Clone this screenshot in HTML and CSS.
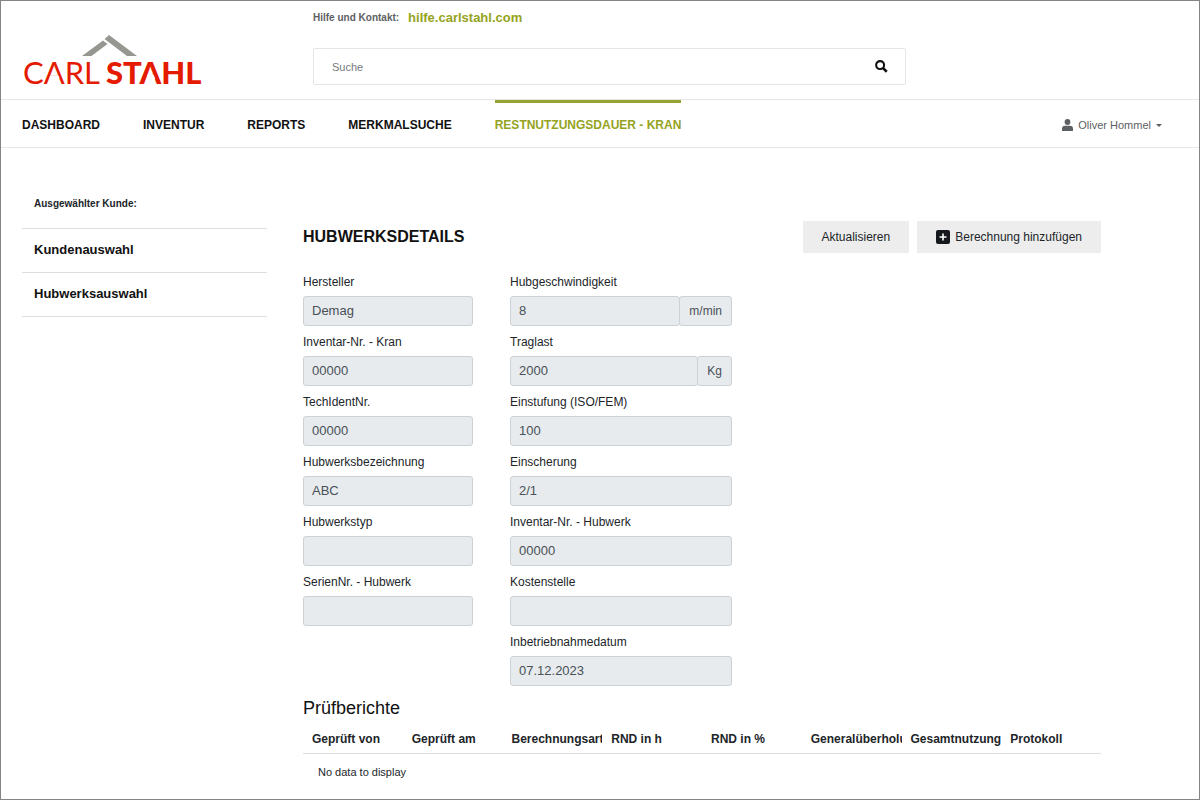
FILE: index.html
```html
<!DOCTYPE html>
<html lang="de">
<head>
<meta charset="utf-8">
<meta name="viewport" content="width=device-width, initial-scale=1">
<title>Restnutzungsdauer - Kran</title>
<link rel="stylesheet" href="styles.css">
</head>
<body>
<header class="header">
  <a class="logo" href="#" aria-label="Carl Stahl">
    <svg width="184" height="51" viewBox="0 0 184 51">
      <path fill="#969790" d="M59 22 80 6.500 84.500 10 68.500 22ZM81.500 5 86 1 114 22H104Z"/>
      <g class="logo-text">
        <text class="logo-light" x="0" y="50">CARL</text>
        <text class="logo-heavy" x="83" y="50">STAHL</text>
      </g>
      <path fill="#fff" d="M27.100 41.400H35.500L36.600 44.200H26ZM124.300 41.100H130.800L132.300 45H122.800Z"/>
    </svg>
  </a>
  <div class="header-main">
    <p class="help">Hilfe und Kontakt: <a class="help-link" href="#">hilfe.carlstahl.com</a></p>
    <form class="search" role="search">
      <input class="search-input" type="search" placeholder="Suche" aria-label="Suche">
      <button class="search-button" type="button" aria-label="Suchen">
        <svg width="13" height="13" viewBox="0 0 14 14" fill="none" stroke="#111" stroke-width="2.200"><circle cx="5.500" cy="5.500" r="4.300"/><path stroke-width="2.800" d="m8.700 8.700 4 4"/></svg>
      </button>
    </form>
  </div>
</header>
<nav class="nav">
  <ul class="nav-list">
    <li><a class="nav-link" href="#">DASHBOARD</a></li>
    <li><a class="nav-link" href="#">INVENTUR</a></li>
    <li><a class="nav-link" href="#">REPORTS</a></li>
    <li><a class="nav-link" href="#">MERKMALSUCHE</a></li>
    <li><a class="nav-link active" href="#" aria-current="page">RESTNUTZUNGSDAUER - KRAN</a></li>
  </ul>
  <button class="user" type="button">
    <svg width="11" height="12" viewBox="0 0 11 12" fill="#5d6063"><circle cx="5.500" cy="3" r="2.900"/><path d="M0 12V9.800Q0 6.800 3 6.800H8Q11 6.800 11 9.800V12Z"/></svg>
    <span>Oliver Hommel</span>
    <svg width="6" height="3" viewBox="0 0 6 3" fill="#5d6063"><path d="M0 0H6L3 3Z"/></svg>
  </button>
</nav>
<div class="page">
  <aside class="sidebar">
    <p class="sidebar-title">Ausgewählter Kunde:</p>
    <a class="sidebar-link" href="#">Kundenauswahl</a>
    <a class="sidebar-link" href="#">Hubwerksauswahl</a>
  </aside>
  <main class="content">
    <div class="content-head">
      <h1 class="title">HUBWERKSDETAILS</h1>
      <div class="actions">
        <button class="button" type="button">Aktualisieren</button>
        <button class="button" type="button">
          <svg width="14" height="14" viewBox="0 0 14 14"><rect width="14" height="14" rx="2" fill="#15191d"/><path d="M7 3.500V10.500M3.500 7H10.500" stroke="#fff" stroke-width="1.600"/></svg>
          <span>Berechnung hinzufügen</span>
        </button>
      </div>
    </div>
    <form class="details">
      <div class="column">
        <div class="field"><label for="hersteller">Hersteller</label><div class="group"><input id="hersteller" value="Demag" readonly></div></div>
        <div class="field"><label for="kran">Inventar-Nr. - Kran</label><div class="group"><input id="kran" value="00000" readonly></div></div>
        <div class="field"><label for="techident">TechIdentNr.</label><div class="group"><input id="techident" value="00000" readonly></div></div>
        <div class="field"><label for="bezeichnung">Hubwerksbezeichnung</label><div class="group"><input id="bezeichnung" value="ABC" readonly></div></div>
        <div class="field"><label for="typ">Hubwerkstyp</label><div class="group"><input id="typ" value="" readonly></div></div>
        <div class="field"><label for="serie">SerienNr. - Hubwerk</label><div class="group"><input id="serie" value="" readonly></div></div>
      </div>
      <div class="column">
        <div class="field"><label for="geschwindigkeit">Hubgeschwindigkeit</label><div class="group"><input id="geschwindigkeit" value="8" readonly><span class="unit">m/min</span></div></div>
        <div class="field"><label for="traglast">Traglast</label><div class="group"><input id="traglast" value="2000" readonly><span class="unit">Kg</span></div></div>
        <div class="field"><label for="einstufung">Einstufung (ISO/FEM)</label><div class="group"><input id="einstufung" value="100" readonly></div></div>
        <div class="field"><label for="einscherung">Einscherung</label><div class="group"><input id="einscherung" value="2/1" readonly></div></div>
        <div class="field"><label for="hubwerk">Inventar-Nr. - Hubwerk</label><div class="group"><input id="hubwerk" value="00000" readonly></div></div>
        <div class="field"><label for="kostenstelle">Kostenstelle</label><div class="group"><input id="kostenstelle" value="" readonly></div></div>
        <div class="field"><label for="datum">Inbetriebnahmedatum</label><div class="group"><input id="datum" value="07.12.2023" readonly></div></div>
      </div>
    </form>
    <h2 class="subtitle">Prüfberichte</h2>
    <table class="reports">
      <thead>
        <tr><th>Geprüft von</th><th>Geprüft am</th><th>Berechnungsart</th><th>RND in h</th><th>RND in %</th><th>Generalüberholung</th><th>Gesamtnutzung</th><th>Protokoll</th></tr>
      </thead>
      <tbody>
        <tr><td colspan="8">No data to display</td></tr>
      </tbody>
    </table>
  </main>
</div>
</body>
</html>
```

FILE: styles.css
```css
* { box-sizing: border-box; }

body {
  margin: 0;
  min-height: 100vh;
  border: 1px solid #858585;
  background: #fff;
  color: #212529;
  font: 12px/18px "Liberation Sans", Arial, sans-serif;
}

a { color: inherit; text-decoration: none; }
button, input { font: inherit; color: inherit; }
svg { display: block; flex: none; }

.header {
  display: grid;
  grid-template-columns: 290px minmax(0, 593px);
  padding: 8px 22px 14px;
}

.logo { align-self: end; }
.logo svg { overflow: visible; }

.logo-text {
  fill: #e41b00;
  font-family: Lato, sans-serif;
  font-size: 31px;
}

.logo-light { font-weight: 400; }
.logo-heavy { font-weight: 900; }

.help {
  display: flex;
  align-items: center;
  gap: 9px;
  margin: 0 0 21px;
  font-size: 10px;
  font-weight: 700;
  color: #5d6063;
}

.help-link { font-size: 13px; color: #95a321; }

.search {
  display: flex;
  height: 37px;
  border: 1px solid #e6e6e6;
  border-radius: 2px;
}

.search-input {
  flex: 1;
  min-width: 0;
  padding: 0 18px;
  border: 0;
  background: none;
  font-size: 11px;
}

.search-input::placeholder { color: #75797d; opacity: 1; }

.search-button {
  display: flex;
  align-items: center;
  padding: 0 17px;
  border: 0;
  background: none;
}

.nav {
  display: flex;
  justify-content: space-between;
  height: 49px;
  padding: 0 37px 0 21px;
  border-top: 1px solid #e6e6e6;
  border-bottom: 1px solid #e6e6e6;
}

.nav-list {
  display: flex;
  gap: 43px;
  margin: 0;
  padding: 0;
  list-style: none;
  font-weight: 700;
  color: #111;
}

.nav-link {
  display: block;
  height: 47px;
  border-top: 3px solid transparent;
  line-height: 45px;
  white-space: nowrap;
}

.nav-link.active { border-color: #95a336; color: #95a321; }

.user {
  display: flex;
  align-items: center;
  gap: 5px;
  padding: 3px 0 0;
  border: 0;
  background: none;
  font-size: 11px;
  color: #5d6063;
}

.page {
  display: grid;
  grid-template-columns: 245px minmax(0, 1fr);
  gap: 36px;
  padding: 47px 98px 0 21px;
}

.sidebar-title {
  margin: 0;
  padding: 0 12px 15px;
  border-bottom: 1px solid #dedede;
  font-size: 10px;
  font-weight: 700;
}

.sidebar-link {
  display: block;
  padding: 12px 12px 13px;
  border-bottom: 1px solid #dedede;
  font-size: 13px;
  font-weight: 700;
  color: #111;
}

.content { padding-top: 26px; }

.content-head {
  display: flex;
  align-items: center;
  justify-content: space-between;
  margin-bottom: 20px;
}

.title { margin: 0; font-size: 16px; color: #111; }

.actions { display: flex; gap: 8px; }

.button {
  display: flex;
  align-items: center;
  gap: 5px;
  height: 32px;
  padding: 0 19px;
  border: 0;
  background: #ededed;
}

.details {
  display: grid;
  grid-template-columns: 170fr 222fr 332fr;
  column-gap: 37px;
}

.field { height: 60px; }
.field label { display: block; height: 23px; }

.group { display: flex; height: 30px; }

.group input {
  flex: 1;
  min-width: 0;
  width: 100%;
  padding: 0 8px;
  border: 1px solid #cdd2d6;
  border-radius: 3px;
  background: #e7ebee;
  color: #495057;
  font-size: 13px;
}

.unit {
  padding: 5px 9px;
  margin-left: -1px;
  border: 1px solid #cdd2d6;
  border-radius: 3px;
  background: #e7ebee;
  color: #495057;
}

.subtitle {
  margin: 3px 0 10px;
  font-size: 18px;
  font-weight: 400;
  line-height: 24px;
  color: #111;
}

.reports {
  width: 100%;
  table-layout: fixed;
  border-collapse: collapse;
}

.reports th {
  padding: 0 0 5px 9px;
  border-bottom: 1px solid #dedede;
  overflow: hidden;
  text-align: left;
  white-space: nowrap;
}

.reports td { padding: 9px 15px; font-size: 11px; }
```
